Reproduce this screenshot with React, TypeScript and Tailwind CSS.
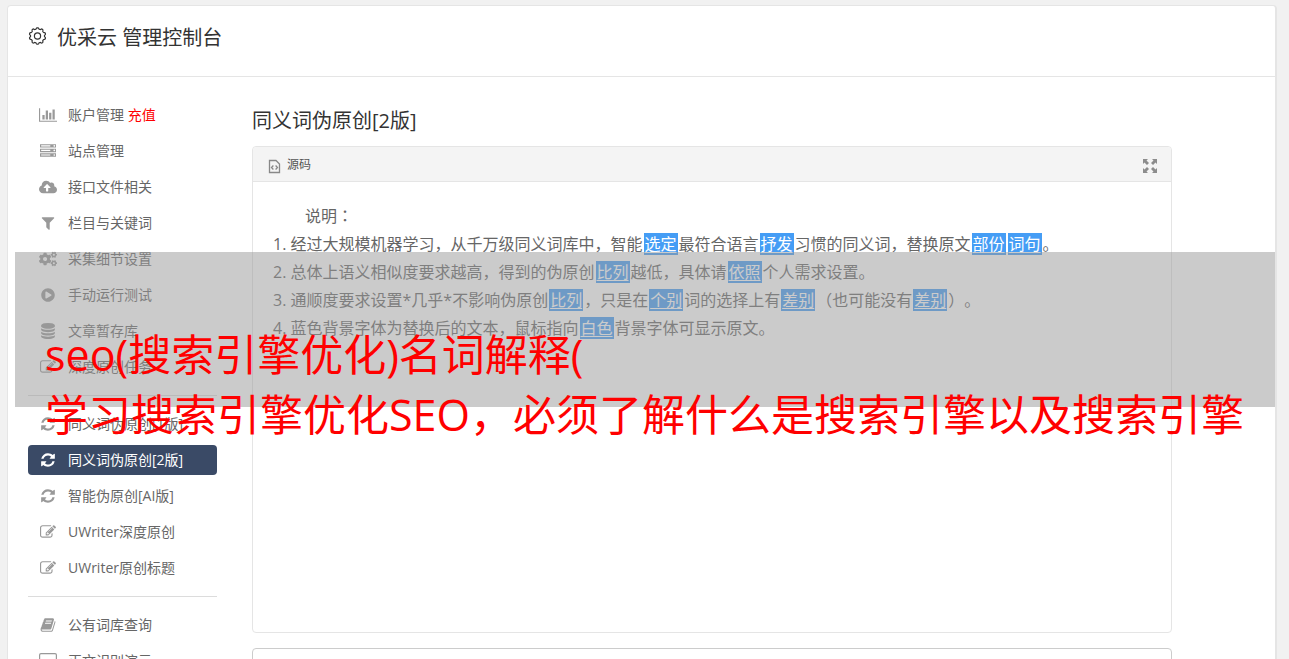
import React from "react";
import { FaCloudUploadAlt, FaCogs, FaPlayCircle } from "react-icons/fa";

const BAR_CHART =
  "M640 896v512h-256v-512h256zm384-512v1024h-256v-1024h256zm1024 1152v128h-2048v-1536h128v1408h1920zm-640-896v768h-256v-768h256zm384-384v1152h-256v-1152h256z";
const SERVER =
  "M128 1408h1024v-128h-1024v128zm0-512h1024v-128h-1024v128zm1568 448q0-40-28-68t-68-28-68 28-28 68 28 68 68 28 68-28 28-68zm-1568-960h1024v-128h-1024v128zm1568 448q0-40-28-68t-68-28-68 28-28 68 28 68 68 28 68-28 28-68zm0-512q0-40-28-68t-68-28-68 28-28 68 28 68 68 28 68-28 28-68zm96 832v384h-1792v-384h1792zm0-512v384h-1792v-384h1792zm0-512v384h-1792v-384h1792z";
const FILTER =
  "M1595 295q17 41-14 70l-493 493v742q0 42-39 59-13 5-25 5-27 0-45-19l-256-256q-19-19-19-45v-486l-493-493q-31-29-14-70 17-39 59-39h1280q42 0 59 39z";
const DATABASE =
  "M896 768q237 0 443-43t325-127v170q0 69-103 128t-280 93.5-385 34.5-385-34.5-280-93.5-103-128v-170q119 84 325 127t443 43zm0 768q237 0 443-43t325-127v170q0 69-103 128t-280 93.5-385 34.5-385-34.5-280-93.5-103-128v-170q119 84 325 127t443 43zm0-384q237 0 443-43t325-127v170q0 69-103 128t-280 93.5-385 34.5-385-34.5-280-93.5-103-128v-170q119 84 325 127t443 43zm0-1152q208 0 385 34.5t280 93.5 103 128v128q0 69-103 128t-280 93.5-385 34.5-385-34.5-280-93.5-103-128v-128q0-69 103-128t280-93.5 385-34.5z";
const EDIT =
  "M888 1184l116-116-152-152-116 116v56h96v96h56zm440-720q-16-16-33 1l-350 350q-17 17-1 33t33-1l350-350q17-17 1-33zm80 594v190q0 119-84.5 203.5t-203.5 84.5h-832q-119 0-203.5-84.5t-84.5-203.5v-832q0-119 84.5-203.5t203.5-84.5h832q63 0 117 25 15 7 18 23 3 17-9 29l-49 49q-14 14-32 8-23-6-45-6h-832q-66 0-113 47t-47 113v832q0 66 47 113t113 47h832q66 0 113-47t47-113v-126q0-13 9-22l64-64q15-15 35-7t20 29zm-96-738l288 288-672 672h-288v-288zm444 132l-92 92-288-288 92-92q28-28 68-28t68 28l152 152q28 28 28 68t-28 68z";
const REFRESH =
  "M1639 1056q0 5-1 7-64 268-268 434.5t-478 166.5q-146 0-282.5-55t-243.5-157l-129 129q-19 19-45 19t-45-19-19-45v-448q0-26 19-45t45-19h448q26 0 45 19t19 45-19 45l-137 137q71 66 161 102t187 36q134 0 250-65t186-179q11-17 53-117 8-23 30-23h192q13 0 22.5 9.5t9.5 22.5zm25-800v448q0 26-19 45t-45 19h-448q-26 0-45-19t-19-45 19-45l138-138q-148-137-349-137-134 0-250 65t-186 179q-11 17-53 117-8 23-30 23h-199q-13 0-22.5-9.5t-9.5-22.5v-7q65-268 270-434.5t480-166.5q146 0 284 55.5t245 156.5l130-129q19-19 45-19t45 19 19 45z";
const BOOK =
  "M1703 478q40 57 18 129l-275 906q-19 64-76.5 107.5t-122.5 43.5h-923q-77 0-148.5-53.5t-99.5-131.5q-24-67-2-127 0-4 3-27t4-37q1-8-3-21.5t-3-19.5q2-11 8-21t16.5-23.5 16.5-23.5q23-38 45-91.5t30-91.5q3-10 .5-30t-.5-28q3-11 17-28t17-23q21-36 42-92t25-90q1-9-2.5-32t.5-28q4-13 22-30.5t22-22.5q19-26 42.5-84.5t27.5-96.5q1-8-3-25.5t-2-26.5q2-8 9-18t18-23 17-21q8-12 16.5-30.5t15-35 16-36 19.5-32 26.5-23.5 36-11.5 47.5 5.5l-1 3q38-9 51-9h761q74 0 114 56t18 130l-274 906q-36 119-71.5 153.5t-128.5 34.5h-869q-27 0-38 15-11 16-1 43 24 70 144 70h923q29 0 56-15.5t35-41.5l300-987q7-22 5-57 38 15 59 43zm-1064 2q-4 13 2 22.5t20 9.5h608q13 0 25.5-9.5t16.5-22.5l21-64q4-13-2-22.5t-20-9.5h-608q-13 0-25.5 9.5t-16.5 22.5zm-83 256q-4 13 2 22.5t20 9.5h608q13 0 25.5-9.5t16.5-22.5l21-64q4-13-2-22.5t-20-9.5h-608q-13 0-25.5 9.5t-16.5 22.5z";

function Glyph({ d, wide }: { d: string; wide?: boolean }) {
  return (
    <svg
      viewBox={wide ? "0 0 2048 1792" : "0 0 1792 1792"}
      className={wide ? "h-4 w-[18px]" : "size-4"}
      fill="currentColor"
      aria-hidden="true"
    >
      <path d={d} />
    </svg>
  );
}

function Desktop() {
  return (
    <svg viewBox="0 0 18 16" className="h-4 w-[18px]" fill="none" stroke="currentColor" aria-hidden="true">
      <rect x="0.6" y="0.6" width="16.8" height="11.8" rx="1.4" strokeWidth="1.2" />
      <path d="M5 15.4h8M9 12.4v3" strokeWidth="1.2" />
    </svg>
  );
}

function Gear() {
  const points = Array.from({ length: 121 }, (_, i) => {
    const a = (i / 120) * Math.PI * 2;
    const r = 7.6 + 0.65 * Math.tanh(2.2 * Math.cos(10 * a));
    return `${(9.5 + r * Math.sin(a)).toFixed(2)} ${(9 - r * Math.cos(a)).toFixed(2)}`;
  });
  return (
    <svg viewBox="0 0 18 18" className="size-[18px]" fill="none" stroke="currentColor" strokeWidth="1.2" aria-hidden="true">
      <path d={`M${points.join("L")}z`} />
      <circle cx="9.5" cy="9" r="3.1" />
    </svg>
  );
}

type Item = { label: string; icon: React.ReactNode; extra?: string; active?: boolean };

const groups: Item[][] = [
  [
    { label: "账户管理", extra: "充值", icon: <Glyph d={BAR_CHART} wide /> },
    { label: "站点管理", icon: <Glyph d={SERVER} /> },
    { label: "接口文件相关", icon: <FaCloudUploadAlt className="h-4 w-[18px]" /> },
    { label: "栏目与关键词", icon: <Glyph d={FILTER} /> },
    { label: "采集细节设置", icon: <FaCogs className="h-4 w-[18px]" /> },
    { label: "手动运行测试", icon: <FaPlayCircle className="size-[14px]" /> },
    { label: "文章暂存库", icon: <Glyph d={DATABASE} /> },
    { label: "深度原创任务", icon: <Glyph d={EDIT} /> },
  ],
  [
    { label: "同义词伪原创[1版]", icon: <Glyph d={REFRESH} /> },
    { label: "同义词伪原创[2版]", icon: <Glyph d={REFRESH} />, active: true },
    { label: "智能伪原创[AI版]", icon: <Glyph d={REFRESH} /> },
    { label: "UWriter深度原创", icon: <Glyph d={EDIT} /> },
    { label: "UWriter原创标题", icon: <Glyph d={EDIT} /> },
  ],
  [
    { label: "公有词库查询", icon: <Glyph d={BOOK} /> },
    { label: "正文识别演示", icon: <Desktop /> },
  ],
];

function NavItem({ label, icon, extra, active }: Item) {
  return (
    <a
      href="#"
      className={
        active
          ? "flex h-[30px] items-center rounded bg-[#3a4a66] pl-2.5 text-sm text-white"
          : "flex h-[30px] items-center rounded pl-2.5 text-sm text-[#666]"
      }
    >
      <span className={active ? "flex w-5 justify-center" : "flex w-5 justify-center text-[#999]"}>{icon}</span>
      <span className="ml-2.5 whitespace-nowrap">
        {label}
        {extra && <span className="text-[#f00]"> {extra}</span>}
      </span>
    </a>
  );
}

function Mark({ children }: { children: React.ReactNode }) {
  return (
    <a href="#" className="mx-px bg-[#459df5] px-px text-white underline underline-offset-2">
      {children}
    </a>
  );
}

export default function App() {
  return (
    <div className="h-screen overflow-hidden bg-[#f1f1f1] pt-[5px] pr-3 pl-[7px] font-['Open_Sans','Noto_Sans_CJK_SC',sans-serif] text-[#666] [text-spacing-trim:space-all]">
      <div className="relative min-h-full rounded border border-r-2 border-[#e5e5e5] bg-white">
        <header className="flex h-[71px] items-start border-b border-[#e5e5e5] pt-4 pl-5 text-[#333]">
          <span className="pt-[5px]">
            <Gear />
          </span>
          <h1 className="ml-[11px] text-xl leading-8">优采云 管理控制台</h1>
        </header>

        <div className="flex pl-5">
          <nav className="w-[189px] shrink-0 pt-[23px]">
            {groups.map((group, i) => (
              <ul
                key={i}
                className={
                  i === 0
                    ? "flex flex-col gap-1.5"
                    : "mt-[13px] flex flex-col gap-1.5 border-t border-[#dcdcdc] pt-[13px]"
                }
              >
                {group.map((item) => (
                  <li key={item.label}>
                    <NavItem {...item} />
                  </li>
                ))}
              </ul>
            ))}
          </nav>

          <main className="mr-[103px] ml-[35px] min-w-0 flex-1 pt-7">
            <h2 className="text-xl leading-8 text-[#333]">同义词伪原创[2版]</h2>
            <section className="mt-[9px] flex h-[487px] flex-col rounded border border-[#e5e5e5]">
              <div className="flex h-[35px] items-center justify-between rounded-t border-b border-[#e5e5e5] bg-[#f4f4f4] pt-1 pr-[13px] pl-[15px]">
                <button type="button" className="flex items-center gap-1.5 text-xs leading-4 text-[#555]">
                  <svg viewBox="0 0 13 15" className="h-[15px] w-[13px] text-[#888]" fill="none" stroke="currentColor" aria-hidden="true">
                    <path d="M1.5 1.5h6.5l3.5 3.5v8.5h-10z" strokeWidth="1.3" />
                    <path d="M5.4 6.5L3.5 8.5l1.900 2M7.600 6.500l1.900 2-1.900 2" strokeWidth="1.3" />
                  </svg>
                  <span className="pb-0.5">源码</span>
                </button>
                <button type="button" aria-label="全屏" className="text-[#8c8c8c]">
                  <svg viewBox="0 0 16 16" className="size-4" fill="currentColor" aria-hidden="true">
                    <path d="M1 1h5L4.500 2.500 7 5 5 7 2.500 4.500 1 6zM15 1v5l-1.500-1.500L11 7 9 5l2.500-2.500L10 1zM1 15v-5l1.500 1.500L5 9l2 2-2.500 2.500L6 15zM15 15h-5l1.500-1.500L9 11l2-2 2.500 2.500L15 10z" />
                  </svg>
                </button>
              </div>
              <div className="px-5 pt-[19px] text-base leading-7">
                <p className="pl-8">
                  说明<span className="font-['Noto_Sans_CJK_JP',sans-serif]">：</span>
                </p>
                <p>
                  1. 经过大规模机器学习，从千万级同义词库中，智能<Mark>选定</Mark>最符合语言<Mark>抒发</Mark>
                  习惯的同义词，替换原文<Mark>部份</Mark>
                  <Mark>词句</Mark>。
                </p>
                <p>
                  2. 总体上语义相似度要求越高，得到的伪原创<Mark>比列</Mark>越低，具体请<Mark>依照</Mark>个人需求设置。
                </p>
                <p>
                  3. 通顺度要求设置*几乎*不影响伪原创<Mark>比列</Mark>，只是在<Mark>个别</Mark>词的选择上有
                  <Mark>差别</Mark>（也可能没有<Mark>差别</Mark>）。
                </p>
                <p>
                  4. 蓝色背景字体为替换后的文本，鼠标指向<Mark>白色</Mark>背景字体可显示原文。
                </p>
              </div>
            </section>
            <section className="mt-[15px] h-24 rounded border border-[#ccc]" />
          </main>
        </div>

        <div className="absolute inset-x-0 top-[246px] ml-[7px] h-[155px] bg-[#979797]/50 pt-[73px] pl-[30px] text-[43px] leading-[60px] whitespace-nowrap text-[#f00]">
          <p>seo(搜索引擎优化)名词解释(</p>
          <p>学习搜索引擎优化SEO，必须了解什么是搜索引擎以及搜索引擎</p>
        </div>
      </div>
    </div>
  );
}
